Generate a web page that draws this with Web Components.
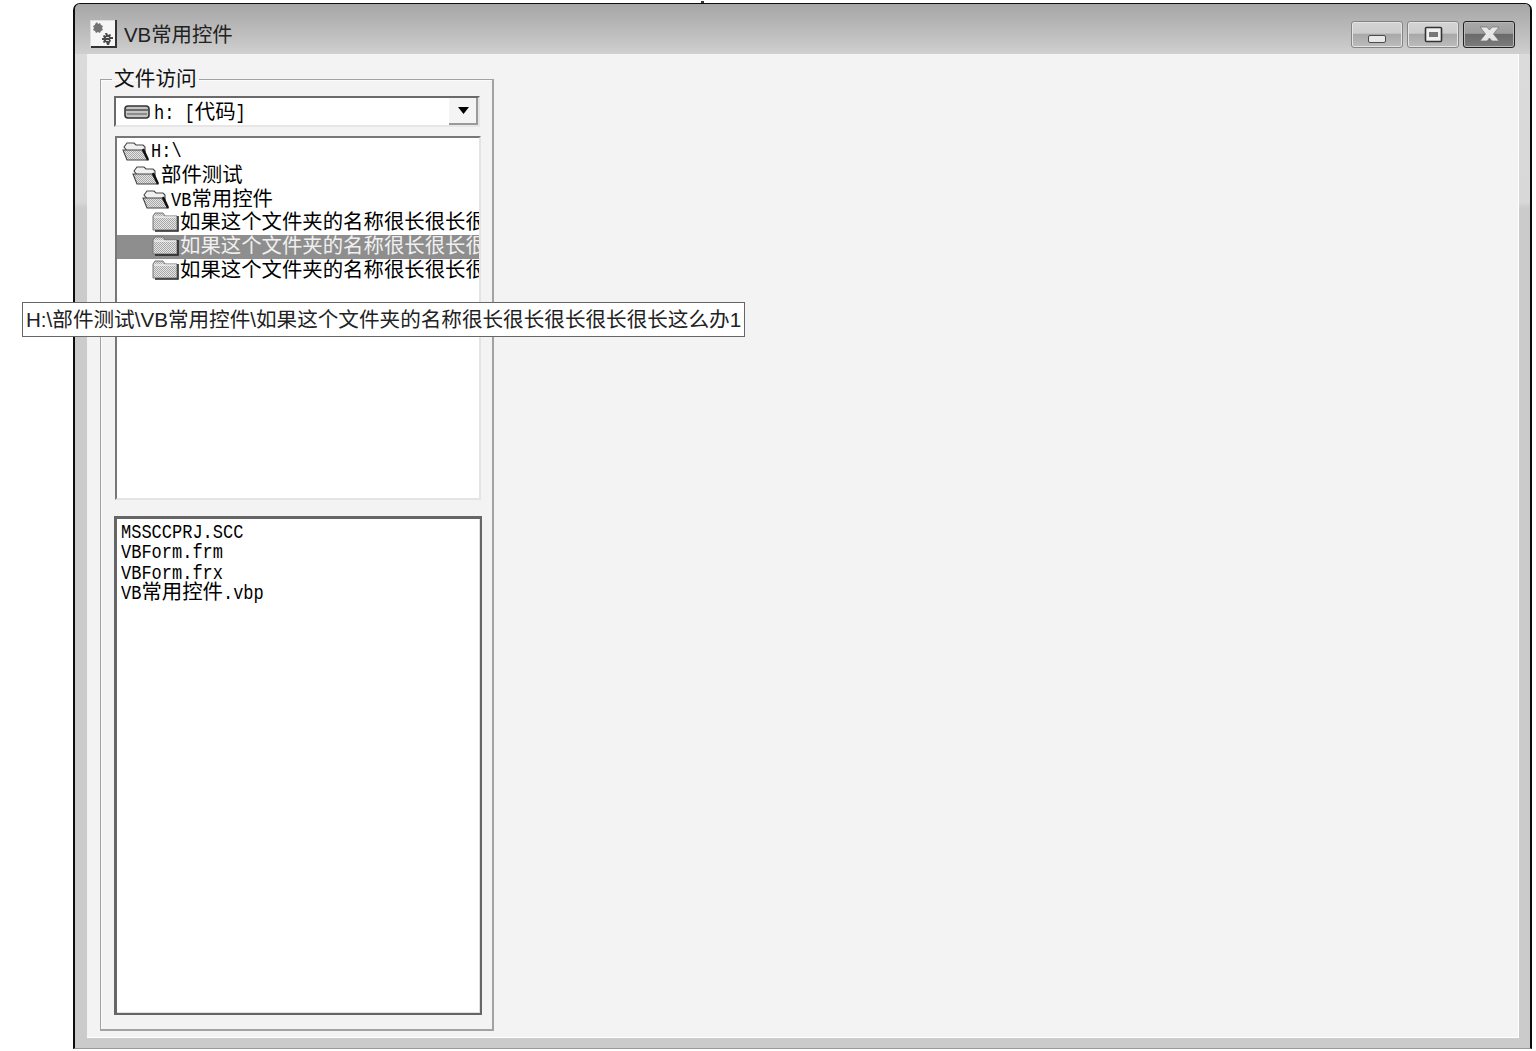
<!DOCTYPE html>
<html lang="zh">
<head>
<meta charset="utf-8">
<title>VB常用控件</title>
<style>
  html, body { margin: 0; background: #fff; }
  body { width: 1536px; height: 1051px; overflow: hidden; position: relative; }
</style>
</head>
<body>

<vb-window caption="VB常用控件">
  <group-box legend="文件访问">
    <drive-combo><mono-text>h:&nbsp;[</mono-text><cjk-text>代码</cjk-text><mono-text>]</mono-text></drive-combo>
    <dir-tree>
      <tree-row level="0" kind="open"><mono-text>H:\</mono-text></tree-row>
      <tree-row level="1" kind="open"><cjk-text>部件测试</cjk-text></tree-row>
      <tree-row level="2" kind="open"><mono-text>VB</mono-text><cjk-text>常用控件</cjk-text></tree-row>
      <tree-row level="3" kind="closed"><cjk-text>如果这个文件夹的名称很长很长很长很长很长这么办</cjk-text></tree-row>
      <tree-row level="3" kind="closed" selected><cjk-text>如果这个文件夹的名称很长很长很长很长很长这么办1</cjk-text></tree-row>
      <tree-row level="3" kind="closed"><cjk-text>如果这个文件夹的名称很长很长很长很长很长这么办2</cjk-text></tree-row>
    </dir-tree>
    <file-list>
      <file-row><mono-text>MSSCCPRJ.SCC</mono-text></file-row>
      <file-row><mono-text>VBForm.frm</mono-text></file-row>
      <file-row><mono-text>VBForm.frx</mono-text></file-row>
      <file-row><mono-text>VB</mono-text><cjk-text>常用控件</cjk-text><mono-text>.vbp</mono-text></file-row>
    </file-list>
  </group-box>
</vb-window>
<path-tooltip>H:\部件测试\VB常用控件\如果这个文件夹的名称很长很长很长很长很长这么办1</path-tooltip>

<script>
const CJK = '"Noto Sans CJK SC", sans-serif';

// no whitespace before the slot: this host is inline, a space would show up in the text
class CjkText extends HTMLElement {
  constructor() {
    super();
    this.attachShadow({ mode: 'open' });
    this.shadowRoot.innerHTML = `<style>:host { display: inline; font-family: ${CJK}; font-size: 20.4px; line-height: 0; }</style><slot></slot>`;
  }
}

// the reference's bitmap latin font is tall and narrow, so stretch the mono glyphs
class MonoText extends HTMLElement {
  constructor() {
    super();
    this.attachShadow({ mode: 'open' });
    this.shadowRoot.innerHTML = `
      <style>
        :host {
          display: inline-block;
          font-family: "Liberation Mono", monospace;
          font-size: 17px;
          line-height: 20px;
          transform: scaleY(1.22);
          transform-origin: 50% 70%;
        }
      </style>
      <slot></slot>`;
  }
}

class CaptionButton extends HTMLElement {
  constructor() {
    super();
    this.attachShadow({ mode: 'open' });
    const kind = this.getAttribute('kind');
    const glyphs = {
      min: '<rect x="16.500" y="13.500" width="17" height="7" rx="1.500" fill="#e8e8e8" stroke="#4a4a4a"/>',
      max: '<rect x="17.500" y="5.500" width="16" height="14" rx="1" fill="#f0f0f0" stroke="#333" stroke-width="1.600"/><rect x="21" y="10" width="9" height="5" fill="#777"/>',
      close: '<path d="M16 5h7l2.500 3 2.500-3h7l-5.500 7 5.500 7h-7L25.500 16 23 19h-7l5.500-7z" fill="#e6e6e6" stroke="#777" stroke-width=".8"/>'
    };
    this.shadowRoot.innerHTML = `
      <style>
        :host {
          display: block;
          width: 52px;
          height: 27px;
          box-sizing: border-box;
          border: 1px solid #858585;
          border-radius: 3px;
          background: linear-gradient(#d4d4d4 0, #cdcdcd 45%, #a8a8a8 48%, #bcbcbc 100%);
          box-shadow: inset 0 0 0 1px #e4e4e4;
        }
        :host([kind="close"]) {
          border-color: #222;
          background: linear-gradient(#a8a8a8 0, #9e9e9e 45%, #6a6a6a 50%, #7c7c7c 100%);
          box-shadow: inset 0 0 0 1px #b8b8b8;
        }
        svg { display: block; }
      </style>
      <svg width="50" height="25" viewBox="0 0 50 25">${glyphs[kind]}</svg>`;
  }
}

class VbWindow extends HTMLElement {
  constructor() {
    super();
    this.attachShadow({ mode: 'open' });
    this.shadowRoot.innerHTML = `
      <style>
        :host {
          display: flex;
          flex-direction: column;
          position: relative;
          box-sizing: border-box;
          margin: 3px 0 0 73px;
          width: 1459px;
          height: 1046px;
          border: 2px solid #0c0c0c;
          border-top-width: 1px;
          border-bottom: 1px solid #999;
          border-radius: 7px 7px 0 0;
          background: linear-gradient(#dcdcdc 0, #d8d8d8 198px, #cbcbcb 204px);
        }
        :host::before {
          content: "";
          position: absolute;
          left: 626px;
          top: -3px;
          width: 3px;
          height: 2px;
          background: #333;
        }
        .titlebar {
          flex: none;
          height: 50px;
          box-sizing: border-box;
          display: flex;
          align-items: flex-start;
          padding: 17px 15px 0 15px;
          border-radius: 5px 5px 0 0;
          background: linear-gradient(#a6a6a6, #c2c2c2 70%, #d0d0d0);
          font: 20.4px "Liberation Sans", ${CJK};
          color: #222;
        }
        .caption { margin-left: 7px; line-height: 29px; flex: 1; }
        .buttons { display: flex; gap: 4px; }
        .icon { display: block; flex: none; margin-top: -1px; }
        .client {
          flex: 1;
          display: flex;
          margin: 0 11px 10px 12px;
          padding: 12px 0 6px 13px;
          background: #f3f3f3;
          border-right: 1px solid #fff;
          border-bottom: 1px solid #fff;
        }
      </style>
      <div class="titlebar">
        <svg class="icon" width="27" height="28" viewBox="0 0 27 28">
          <rect x=".5" y=".5" width="25" height="26" fill="#f6f6f6" stroke="#ddd"/>
          <path d="M26 0v27H1" fill="none" stroke="#333" stroke-width="2"/>
          <path d="M5 4l2-2 1 2 2-1 1 2 2 1-1 2 1 2-2 1-1 2-2-1-2 1-1-2-2-1 1-2-1-2 2-1z" fill="#747474"/>
          <path d="M15 13h2l1 2 2-1 1 1-1 2h3v2h-3l1 2-1 1-1 3h-2l-1-3-2 1-1-1 1-2h-2v-2h2l-1-2 1-1 2 1z" fill="#4a4a4a"/>
          <path d="M16 17h3v1h-3zM16 20h3v1h-3z" fill="#ddd"/>
        </svg>
        <span class="caption"></span>
        <div class="buttons">
          <caption-button kind="min"></caption-button>
          <caption-button kind="max"></caption-button>
          <caption-button kind="close"></caption-button>
        </div>
      </div>
      <div class="client"><slot></slot></div>`;
  }

  connectedCallback() {
    this.shadowRoot.querySelector('.caption').textContent = this.getAttribute('caption');
  }
}

class GroupBox extends HTMLElement {
  constructor() {
    super();
    this.attachShadow({ mode: 'open' });
    this.shadowRoot.innerHTML = `
      <style>
        :host { display: block; width: 394px; }
        fieldset {
          margin: 0;
          height: 100%;
          box-sizing: border-box;
          min-width: 0;
          border: 1px solid #a2a2a2;
          border-right-width: 2px;
          border-bottom-width: 2px;
          padding: 4px 10px 14px 13px;
          box-shadow: inset 1px 1px 0 #fbfbfb;
        }
        legend {
          margin-left: -2px;
          padding: 0 2px 4px;
          font: 20.7px/22px ${CJK};
          color: #111;
        }
        .stack { display: flex; flex-direction: column; height: 100%; }
      </style>
      <fieldset>
        <legend></legend>
        <div class="stack"><slot></slot></div>
      </fieldset>`;
  }

  connectedCallback() {
    this.shadowRoot.querySelector('legend').textContent = this.getAttribute('legend');
  }
}

class DriveCombo extends HTMLElement {
  constructor() {
    super();
    this.attachShadow({ mode: 'open' });
    this.shadowRoot.innerHTML = `
      <style>
        :host {
          display: flex;
          align-items: center;
          flex: none;
          box-sizing: border-box;
          width: 366px;
          height: 31px;
          background: #fff;
          border-style: solid;
          border-width: 2px;
          border-color: #6a6a6a #e6e6e6 #e6e6e6 #6a6a6a;
          color: #000;
          padding-left: 8px;
          line-height: 27px;
        }
        .drive { flex: none; margin-right: 4px; display: block; }
        .text { flex: 1; white-space: nowrap; position: relative; top: 2px; }
        .arrow {
          flex: none;
          width: 29px;
          height: 27px;
          box-sizing: border-box;
          border-style: solid;
          border-width: 0 2px 2px 0;
          border-color: #9a9a9a;
          background: #f4f4f4;
          display: flex;
          align-items: center;
          justify-content: center;
        }
        .arrow svg { display: block; margin-left: 2px; }
      </style>
      <svg class="drive" width="26" height="16" viewBox="0 0 26 16">
        <rect x="1" y="2" width="24" height="12" rx="3" fill="#c4c4c4" stroke="#333" stroke-width="1.600"/>
        <path d="M2 6h22" stroke="#333" stroke-width="1.200"/>
        <path d="M3 10h20" stroke="#8c8c8c" stroke-width="2"/>
      </svg>
      <span class="text"><slot></slot></span>
      <span class="arrow"><svg width="11" height="7" viewBox="0 0 11 7"><path d="M0 0h11L5.500 7z" fill="#000"/></svg></span>`;
  }
}

class DirTree extends HTMLElement {
  constructor() {
    super();
    this.attachShadow({ mode: 'open' });
    this.shadowRoot.innerHTML = `
      <style>
        :host {
          display: block;
          flex: none;
          box-sizing: border-box;
          width: 366px;
          height: 364px;
          margin: 9px 0 0 1px;
          padding-top: 1px;
          overflow: hidden;
          background: #fff;
          border-style: solid;
          border-width: 2px;
          border-color: #777 #e4e4e4 #e4e4e4 #777;
        }
      </style>
      <slot></slot>`;
  }
}

class TreeRow extends HTMLElement {
  constructor() {
    super();
    this.attachShadow({ mode: 'open' });
    const level = Number(this.getAttribute('level'));
    const open = this.getAttribute('kind') === 'open';
    const nudge = open && level > 0 ? 2 : 1;
    const folder = open
      ? `<path d="M2 7l3-4h7l2 2h7l2 2v5H6z" fill="#f0f0f0" stroke="#444" stroke-width="1.100"/>
         <path d="M1 10h19l6 10H5z" fill="url(#d)" stroke="#444" stroke-width="1.100"/>
         <path d="M21 9l5 11" stroke="#111" stroke-width="2.400"/>`
      : `<path d="M1 4l2-3h8l2 3h12v14H1z" fill="url(#d)" stroke="#777"/>
         <path d="M2 5h22" stroke="#fff"/>
         <path d="M26 4v15H3" fill="none" stroke="#222" stroke-width="1.500"/>`;
    this.shadowRoot.innerHTML = `
      <style>
        :host {
          display: flex;
          align-items: center;
          height: 24px;
          padding-left: ${5 + level * 10}px;
          color: #000;
          white-space: nowrap;
          overflow: hidden;
        }
        :host([selected]) { background: #8e8e8e; color: #f0f0f0; }
        svg { display: block; flex: none; margin-right: ${open ? 2 : 1}px; }
        .label { line-height: 24px; position: relative; top: ${nudge}px; }
      </style>
      <svg width="27" height="23" viewBox="0 0 27 23">
        <defs>
          <pattern id="d" width="2" height="2" patternUnits="userSpaceOnUse">
            <rect width="2" height="2" fill="#e6e6e6"/>
            <rect width="1" height="1" fill="#a6a6a6"/>
            <rect x="1" y="1" width="1" height="1" fill="#a6a6a6"/>
          </pattern>
        </defs>
        ${folder}
      </svg>
      <span class="label"><slot></slot></span>`;
  }
}

class FileList extends HTMLElement {
  constructor() {
    super();
    this.attachShadow({ mode: 'open' });
    this.shadowRoot.innerHTML = `
      <style>
        :host {
          display: block;
          flex: none;
          box-sizing: border-box;
          width: 368px;
          height: 499px;
          margin-top: 16px;
          padding: 4px 0 0 4px;
          background: #fff;
          border: 2px solid #666;
          border-top-width: 3px;
          border-left-width: 3px;
          box-shadow: inset -1px -1px 0 #e0e0e0;
        }
      </style>
      <slot></slot>`;
  }
}

class FileRow extends HTMLElement {
  constructor() {
    super();
    this.attachShadow({ mode: 'open' });
    this.shadowRoot.innerHTML = `
      <style>
        :host {
          display: block;
          height: 20.4px;
          line-height: 20.4px;
          color: #000;
          white-space: nowrap;
        }
      </style>
      <slot></slot>`;
  }
}

class PathTooltip extends HTMLElement {
  constructor() {
    super();
    this.attachShadow({ mode: 'open' });
    this.shadowRoot.innerHTML = `
      <style>
        :host {
          position: absolute;
          left: 22px;
          top: 302px;
          box-sizing: border-box;
          width: 723px;
          height: 35px;
          padding: 0 3px;
          background: #fff;
          border: 1px solid #666;
          font: 20.6px/33px "Liberation Sans", ${CJK};
          color: #222;
          white-space: nowrap;
        }
      </style>
      <slot></slot>`;
  }
}

customElements.define('cjk-text', CjkText);
customElements.define('mono-text', MonoText);
customElements.define('caption-button', CaptionButton);
customElements.define('vb-window', VbWindow);
customElements.define('group-box', GroupBox);
customElements.define('drive-combo', DriveCombo);
customElements.define('dir-tree', DirTree);
customElements.define('tree-row', TreeRow);
customElements.define('file-list', FileList);
customElements.define('file-row', FileRow);
customElements.define('path-tooltip', PathTooltip);
</script>
</body>
</html>
